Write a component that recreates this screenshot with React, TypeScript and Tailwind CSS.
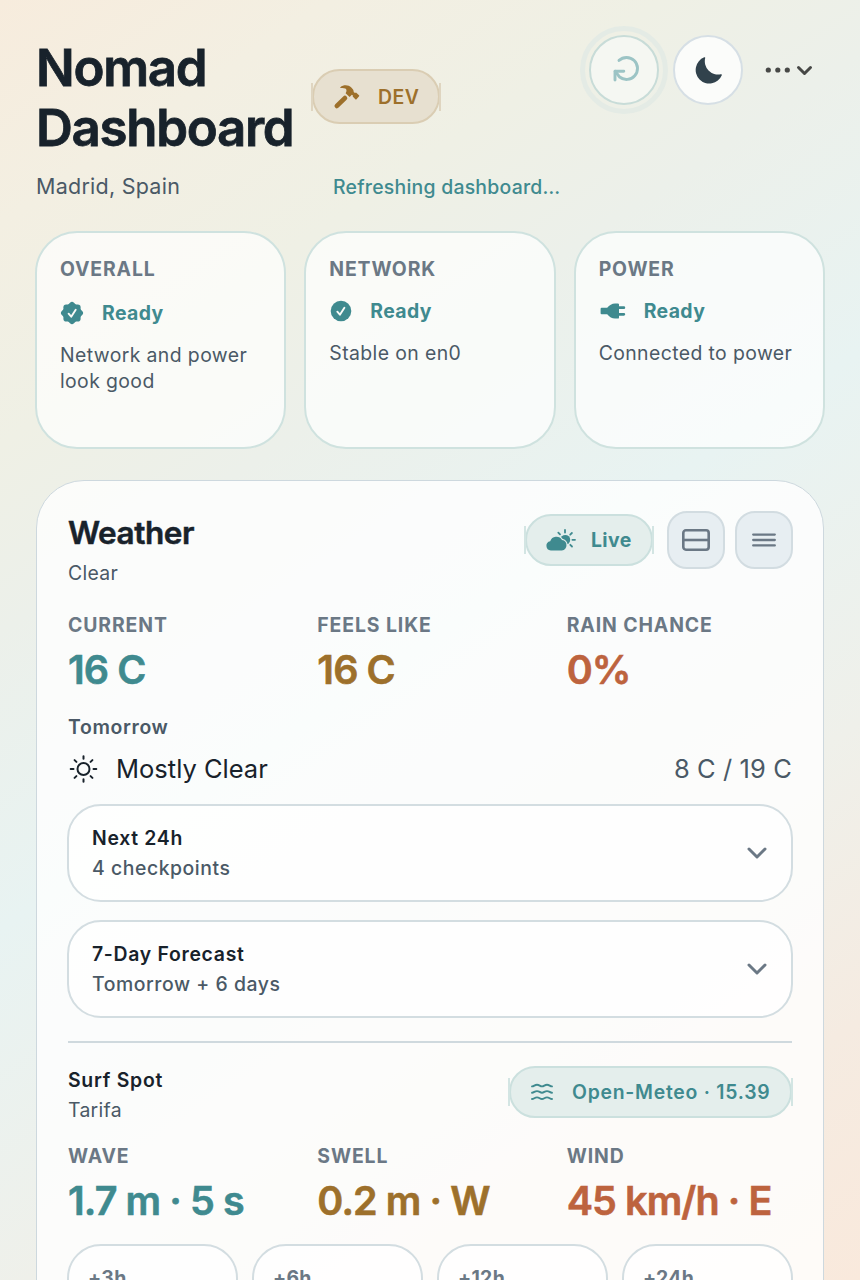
import React from 'react';
import clsx from 'clsx';

interface StatusCardProps {
  title: string;
  icon: React.ReactNode;
  rowClass: string;
  detail: string;
}

interface MetricProps {
  label: string;
  value: string;
  tone: string;
}

const ChevronDown = ({ className }: { className?: string }) => (
  <svg viewBox="0 0 20 12" className={className} fill="none" stroke="currentColor" strokeLinecap="round" strokeLinejoin="round">
    <path d="M2 2l8 8 8-8" />
  </svg>
);

const HammerIcon = () => (
  <svg viewBox="0 0 28 26" className="w-7 h-[26px]" fill="currentColor">
    <path d="M3.900 21.900l8-7.800" fill="none" stroke="currentColor" strokeWidth="4.800" strokeLinecap="round" />
    <path d="M7.300 3.200C10.500.6 15.500.8 18.300 3.400c1.700 1.600 2.600 3 2.400 4.600l1.300 1 1-.6 3 2.800q.5.500.1 1.100l-2.600 3q-.6.500-1.200 0L19.700 12.500l.2-1-1-.7-2.300 2.200-4-3.800c1.300-1.600 1.200-3.700-.3-4.600-1.400-.8-3-.7-4.600-.6q-.8-.2-.4-.8z" />
  </svg>
);

const RefreshIcon = () => (
  <svg viewBox="0 0 30 30" className="w-[30px] h-[30px] ml-1 -mt-0.5" fill="none" stroke="currentColor" strokeWidth="2.9" strokeLinecap="round" strokeLinejoin="round">
    <path d="M8 6.4A11 11 0 1 1 8.6 23L4.2 17.4" />
    <path d="M4 26V17.300H12.800" />
  </svg>
);

const MoonIcon = () => (
  <svg viewBox="0 0 27 27" className="w-[27px] h-[27px] ml-px" fill="currentColor">
    <path d="M9.200.3Q10.400-.1 10.200 1.100A13.200 13.200 0 0 0 25.800 17.200Q27.200 17 26.800 18.200A13.600 13.600 0 1 1 9.200.3z" />
  </svg>
);

const SealCheck = () => (
  <svg viewBox="0 0 24 24" className="w-6 h-6" fill="currentColor">
    <rect x="3.400" y="3.400" width="17.200" height="17.200" rx="2.800" />
    <rect x="3.400" y="3.400" width="17.200" height="17.200" rx="2.800" transform="rotate(45 12 12)" />
    <path d="M8.600 12.700l2.600 3 4.500-7" fill="none" stroke="#f9faf7" strokeWidth="1.900" strokeLinecap="round" strokeLinejoin="round" />
  </svg>
);

const CheckCircle = () => (
  <svg viewBox="0 0 22 22" className="w-[22px] h-[22px] ml-px">
    <circle cx="11" cy="11" r="10.3" fill="currentColor" />
    <path d="M7.300 11.700l2.600 3 4.500-7" fill="none" stroke="#f8faf8" strokeWidth="1.900" strokeLinecap="round" strokeLinejoin="round" />
  </svg>
);

const Plug = () => (
  <svg viewBox="0 0 26 16" className="w-[26px] h-4 ml-px" fill="currentColor">
    <path d="M1.600 4.700h5.600C9.400 2 12 .4 15 .4h2.800q1.200 0 1.200 1.200v1.600h4.800a1.400 1.400 0 0 1 0 2.900H19v3.800h4.800a1.400 1.400 0 0 1 0 2.900H19v1.600q0 1.200-1.200 1.200H15c-3 0-5.600-1.600-7.800-4.300H1.600q-1 0-1-1V5.700q0-1 1-1z" />
  </svg>
);

const CloudSun = () => (
  <svg viewBox="0 0 30 24" className="w-[30px] h-6" fill="currentColor">
    <circle cx="19.300" cy="11.800" r="4.900" />
    <path d="M19 2v2.600M25.900 5l-1.700 1.700M29 11.800h-2.600M26 18.500l-1.700-1.700M12.300 4.600l1.700 1.800" fill="none" stroke="currentColor" strokeWidth="1.800" strokeLinecap="round" />
    <path d="M4.800 22.500a4.700 4.700 0 0 1-.6-9.300A6.500 6.500 0 0 1 16 12a5.300 5.300 0 0 1-.2 10.500z" stroke="#e4eeec" strokeWidth="2.400" paintOrder="stroke" />
  </svg>
);

const SunIcon = () => (
  <svg viewBox="0 0 30 30" className="w-[30px] h-[30px]" fill="none" stroke="currentColor" strokeWidth="2" strokeLinecap="round">
    <circle cx="15.500" cy="15" r="6" />
    <path d="M15.500 2.200v2.600M15.500 25.200v2.600M2.700 15h2.800M25.500 15h2.800M6.600 6.100l1.800 1.800M22.600 22.100l1.800 1.800M24.400 6.100l-1.800 1.800M8.400 22.100l-1.800 1.800" />
  </svg>
);

const WavesIcon = () => (
  <svg viewBox="0 0 22 18" className="w-[22px] h-[18px]" fill="none" stroke="currentColor" strokeWidth="1.900" strokeLinecap="round" strokeLinejoin="round">
    {[2.6, 8.9, 15.2].map((y) => (
      <path key={y} d={`M1 ${y + 0.8}c2 0 2.700-1.600 5-1.600s3 1.600 5 1.600 2.700-1.600 5-1.600 3 1.600 5 1.600`} />
    ))}
  </svg>
);

const Pill = ({ className, edge, children }: { className: string; edge: string; children: React.ReactNode }) => (
  <div className={clsx('relative flex items-center border-2 rounded-full font-semibold text-[19.4px] leading-6 whitespace-nowrap', className)}>
    <span className={clsx('absolute -left-[3px] top-1/2 h-7 w-0.5 -translate-y-1/2', edge)} />
    {children}
    <span className={clsx('absolute -right-[3px] top-1/2 h-7 w-0.5 -translate-y-1/2', edge)} />
  </div>
);

const StatusCard = ({ title, icon, rowClass, detail }: StatusCardProps) => (
  <div className="h-[218px] rounded-[42px] border-2 border-[#cfe2df] bg-white/70 pt-6 pl-[23px] pr-5">
    <h3 className="text-[19.4px] leading-6 font-bold tracking-[0.85px] text-[#6b7885]">{title}</h3>
    <div className={clsx('mt-[18px] flex items-center text-[#3f8a8f]', rowClass)}>
      {icon}
      <span className="ml-[18px] text-[19.4px] leading-6 font-bold tracking-[0.4px]">Ready</span>
    </div>
    <p className="mt-[15px] text-[19.4px] leading-[26px] tracking-[0.4px] text-[#4a5966]">{detail}</p>
  </div>
);

const Metric = ({ label, value, tone }: MetricProps) => (
  <div className="whitespace-nowrap">
    <div className="text-[19.4px] leading-6 font-bold tracking-[0.9px] text-[#6b7885]">{label}</div>
    <div className={clsx('mt-[9px] text-[39.5px] leading-[48px] font-semibold tracking-[-0.9px] [-webkit-text-stroke:0.6px_currentColor]', tone)}>{value}</div>
  </div>
);

const Disclosure = ({ title, detail }: { title: string; detail: string }) => (
  <div className="-mx-px h-[98px] rounded-[34px] border-2 border-[#d3dde1] bg-white/75 pl-[23px] pr-6 flex items-center justify-between">
    <div>
      <div className="text-[19.4px] leading-6 font-semibold tracking-[0.7px] text-[#18222b]">{title}</div>
      <div className="mt-1.5 text-[19.4px] leading-6 font-medium tracking-[0.55px] text-[#4a5966]">{detail}</div>
    </div>
    <ChevronDown className="w-5 h-3 stroke-3 text-[#6b7885]" />
  </div>
);

const weather: MetricProps[] = [
  { label: 'CURRENT', value: '16 C', tone: 'text-[#3f8a8f]' },
  { label: 'FEELS LIKE', value: '16 C', tone: 'text-[#9d702b]' },
  { label: 'RAIN CHANCE', value: '0%', tone: 'text-[#bd633e]' },
];

const surf: MetricProps[] = [
  { label: 'WAVE', value: '1.7 m · 5 s', tone: 'text-[#3f8a8f]' },
  { label: 'SWELL', value: '0.2 m · W', tone: 'text-[#9d702b]' },
  { label: 'WIND', value: '45 km/h · E', tone: 'text-[#bd633e]' },
];

export default function App() {
  return (
    <div className="w-[860px] h-[1280px] overflow-hidden bg-[linear-gradient(146.1deg,#f7ecdd_0%,#f3efe2_12%,#eff0e5_24%,#ecf0ea_34%,#e8f3f2_50%,#eff0ea_70%,#f5ebe1_86%,#f9e9dc_100%)] font-['Inter',sans-serif] text-[#18222b]">
      <header className="flex justify-between pt-[35px] pl-9 pr-[47px]">
        <div className="flex items-center pt-[3px]">
          <h1 className="w-[257px] text-[51px] leading-[60px] font-semibold tracking-[-1.3px] [-webkit-text-stroke:0.8px_currentColor]">Nomad Dashboard</h1>
          <Pill className="ml-[19px] -mt-[3px] h-[55px] w-[128px] pl-[19px] border-[#dacdb3] bg-[#e7e0d0] text-[#9d702b]" edge="bg-[#dfd5c0]">
            <HammerIcon />
            <span className="ml-[17px] tracking-[0.5px]">DEV</span>
          </Pill>
        </div>
        <div className="flex items-center h-[70px]">
          <button className="w-[70px] h-[70px] rounded-full border-2 border-[#c8dcd8] bg-[#f5f7f2] outline-[5px] outline-offset-[4px] outline-[#e4ebe5] flex items-center justify-center text-[#9cc4c5]">
            <RefreshIcon />
          </button>
          <button className="ml-[14px] w-[70px] h-[70px] rounded-full border-2 border-[#d6dfe5] bg-[#fbfcfa] flex items-center justify-center text-[#31424c]">
            <MoonIcon />
          </button>
          <button className="ml-[22px] flex items-center text-[#474846]">
            <svg viewBox="0 0 26 6" className="w-[26px] h-1.5" fill="currentColor">
              <circle cx="3.300" cy="3" r="2.600" />
              <circle cx="12.800" cy="3" r="2.600" />
              <circle cx="22.300" cy="3" r="2.600" />
            </svg>
            <ChevronDown className="ml-1.5 mr-px w-[15px] h-[9px] stroke-4 overflow-visible" />
          </button>
        </div>
      </header>

      <div className="mt-[14px] flex pl-9 leading-7">
        <span className="w-[297px] text-[21.5px] tracking-[0.25px] text-[#4a5966]">Madrid, Spain</span>
        <span className="pt-px text-[19.4px] font-medium tracking-[0.25px] text-[#3f8a8f]">Refreshing dashboard…</span>
      </div>

      <section className="mt-[30px] grid grid-cols-3 gap-[18px] px-[35px]">
        <StatusCard title="OVERALL" icon={<SealCheck />} rowClass="h-7" detail="Network and power look good" />
        <StatusCard title="NETWORK" icon={<CheckCircle />} rowClass="h-[26px] pb-0.5" detail="Stable on en0" />
        <StatusCard title="POWER" icon={<Plug />} rowClass="h-[26px] pb-0.5" detail="Connected to power" />
      </section>

      <main className="mt-[31px] mx-9 h-[900px] rounded-t-[48px] border border-[#cdd8de] bg-white/80 px-[31px] pt-[30px]">
        <div className="flex justify-between items-start h-[75px]">
          <div className="pt-1">
            <h2 className="text-[31.5px] leading-9 font-semibold tracking-[-0.45px] [-webkit-text-stroke:0.5px_currentColor]">Weather</h2>
            <p className="mt-[9px] text-[19.4px] leading-[26px] tracking-[0.3px] text-[#4a5966]">Clear</p>
          </div>
          <div className="flex items-center -mr-px">
            <Pill className="h-[52px] w-[128px] pl-[19px] border-[#cbe0de] bg-[#e4eeec] text-[#3f8a8f]" edge="bg-[#d3e5e3]">
              <CloudSun />
              <span className="ml-[15px] font-bold tracking-[0.4px]">Live</span>
            </Pill>
            <button className="ml-[14px] w-[58px] h-[58px] rounded-[20px] border-2 border-[#d2dce1] bg-[#e7eef2] flex items-center justify-center text-[#6b7885]">
              <svg viewBox="0 0 28 22" className="w-7 h-[22px]" fill="none" stroke="currentColor" strokeWidth="2.600">
                <rect x="1.300" y="1.300" width="25.400" height="19.400" rx="2.600" />
                <path d="M1.300 11h25.400" />
              </svg>
            </button>
            <button className="ml-2.5 w-[58px] h-[58px] rounded-[20px] border-2 border-[#d2dce1] bg-[#e7eef2] flex items-center justify-center text-[#6b7885]">
              <svg viewBox="0 0 24 14" className="w-6 h-3.5" fill="none" stroke="currentColor" strokeWidth="2.300" strokeLinecap="round">
                <path d="M1.200 1.600h21.600M1.200 7h21.600M1.200 12.400h21.600" />
              </svg>
            </button>
          </div>
        </div>

        <div className="mt-[27px] grid grid-cols-3 gap-6">
          {weather.map((m) => <Metric key={m.label} {...m} />)}
        </div>

        <h3 className="mt-[21px] text-[19.4px] leading-6 font-semibold tracking-[0.65px] text-[#4a5966]">Tomorrow</h3>
        <div className="mt-[14px] flex items-center h-8 text-[25.5px]">
          <SunIcon />
          <span className="ml-[18px]">Mostly Clear</span>
          <span className="ml-auto tracking-[0.1px] text-[#4a5966]">8 C / 19 C</span>
        </div>

        <div className="mt-[19px] flex flex-col gap-[18px]">
          <Disclosure title="Next 24h" detail="4 checkpoints" />
          <Disclosure title="7-Day Forecast" detail="Tomorrow + 6 days" />
        </div>

        <div className="mt-[23px] h-0.5 bg-[#cfd9de]" />

        <div className="mt-[23px] flex justify-between items-start h-14">
          <div className="pt-0.5 text-[19.4px] leading-6">
            <div className="font-semibold tracking-[0.75px]">Surf Spot</div>
            <div className="mt-1.5 tracking-[0.3px] text-[#4a5966]">Tarifa</div>
          </div>
          <Pill className="h-[52px] w-[283px] pl-5 border-[#cbe0de] bg-[#e4eeec] text-[#3f8a8f]" edge="bg-[#d3e5e3]">
            <WavesIcon />
            <span className="ml-[19px] tracking-[0.75px]">Open-Meteo · 15.39</span>
          </Pill>
        </div>

        <div className="mt-[22px] grid grid-cols-3 gap-6">
          {surf.map((m) => <Metric key={m.label} {...m} />)}
        </div>

        <div className="mt-[19px] -mx-px grid grid-cols-4 gap-[14px]">
          {['+3h', '+6h', '+12h', '+24h'].map((label) => (
            <div key={label} className="h-40 rounded-[34px] border-2 border-[#d3dde1] bg-white/75 pt-5 pl-[19px] text-[19.4px] leading-6 font-bold tracking-[0.3px] text-[#6b7885]">
              {label}
            </div>
          ))}
        </div>
      </main>
    </div>
  );
}
